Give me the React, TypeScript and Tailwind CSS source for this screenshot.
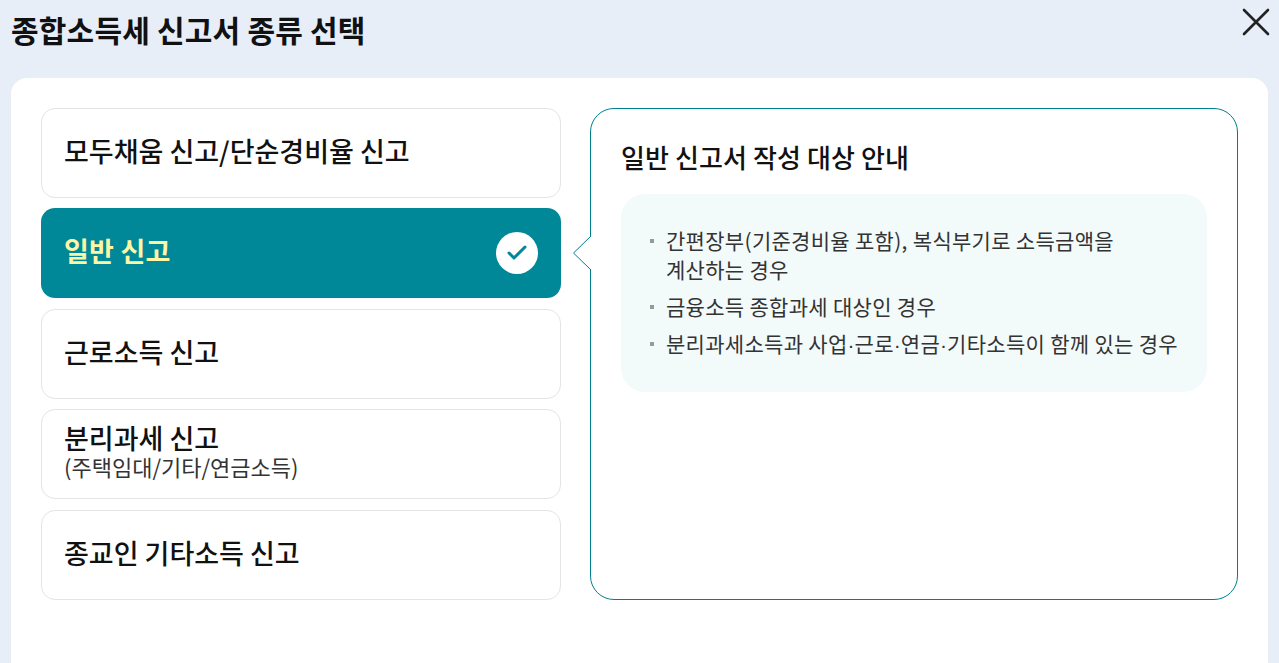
import React from 'react';
import { Check } from 'lucide-react';

const font = { fontFamily: '"Noto Sans CJK KR", "Noto Sans", sans-serif' };

const OptionCard: React.FC<{ active?: boolean; children: React.ReactNode }> = ({ active, children }) => (
  <button
    className={
      active
        ? 'flex h-[90px] w-full items-center justify-between rounded-[14px] bg-[#008898] pl-[23px] pr-[23px] text-left'
        : 'flex h-[90px] w-full items-center justify-between rounded-[14px] border border-[#e4e4e4] bg-white pl-[22px] pr-[23px] text-left'
    }
  >
    {children}
  </button>
);

const Dot = () => <span className="font-['Liberation_Sans'] tracking-[0px]">·</span>;

export default function App() {
  return (
    <div style={font} className="flex h-[663px] flex-col overflow-hidden bg-[#e7eef8] text-[#111]">
      <header className="flex h-[78px] shrink-0 items-start justify-between pl-[11px] pr-[8px]">
        <h1 className="mt-[9px] text-[30px] leading-[40px] font-bold tracking-[0.2px]">종합소득세 신고서 종류 선택</h1>
        <button className="mt-[7px]">
          <svg width="30" height="30" viewBox="0 0 30 30" fill="none" stroke="#222" strokeWidth="2.6" strokeLinecap="round">
            <path d="M3 3 L27 27 M27 3 L3 27" />
          </svg>
        </button>
      </header>
      <main className="mx-[11px] flex flex-1 gap-[29px] rounded-t-[16px] bg-white px-[30px] pt-[30px]">
        <div className="flex w-[520px] shrink-0 flex-col gap-[10.4px]">
          <OptionCard>
            <span className="pb-[4px] text-[27px] leading-[36px] font-medium">모두채움 신고/단순경비율 신고</span>
          </OptionCard>
          <OptionCard active>
            <span className="pb-[4px] text-[27px] leading-[36px] font-bold tracking-[0.2px] text-[#fdf6a5]">일반 신고</span>
            <span className="flex h-[42px] w-[42px] items-center justify-center rounded-full bg-white">
              <Check className="h-[24px] w-[24px] text-[#008898]" strokeWidth={3} />
            </span>
          </OptionCard>
          <OptionCard>
            <span className="pb-[4px] text-[27px] leading-[36px] font-medium">근로소득 신고</span>
          </OptionCard>
          <OptionCard>
            <span className="flex flex-col pb-[6px]">
              <span className="text-[27px] leading-[30px] font-medium">분리과세 신고</span>
              <span className="text-[22px] leading-[26px] text-[#333]">(주택임대/기타/연금소득)</span>
            </span>
          </OptionCard>
          <OptionCard>
            <span className="pb-[4px] text-[27px] leading-[36px] font-medium">종교인 기타소득 신고</span>
          </OptionCard>
        </div>
        <section className="relative h-[492px] w-[648px] rounded-[24px] border border-[#00808f] bg-white px-[30px] pt-[29px]">
          <svg className="absolute top-[126px] left-[-19px]" width="20" height="36" viewBox="0 0 20 36">
            <path d="M19 1 L1.5 18 L19 35" fill="white" stroke="#00808f" strokeWidth="1" />
            <rect x="19" y="1.5" width="1" height="33" fill="white" />
          </svg>
          <h2 className="text-[26px] leading-[38px] font-medium tracking-[0.1px]">일반 신고서 작성 대상 안내</h2>
          <div className="mt-[18px] h-[198px] rounded-[24px] bg-[#f3fafa] pt-[32px] pl-[29px]">
            <ul className="flex flex-col gap-[8px] text-[21px] leading-[29px] tracking-[0.3px] text-[#333]">
              <li className="flex">
                <span className="mt-[13px] mr-[12px] h-[4px] w-[4px] shrink-0 bg-[#999]" />
                <span>
                  간편장부(기준경비율 포함), 복식부기로 소득금액을
                  <br />
                  계산하는 경우
                </span>
              </li>
              <li className="flex">
                <span className="mt-[13px] mr-[12px] h-[4px] w-[4px] shrink-0 bg-[#999]" />
                <span>금융소득 종합과세 대상인 경우</span>
              </li>
              <li className="flex">
                <span className="mt-[13px] mr-[12px] h-[4px] w-[4px] shrink-0 bg-[#999]" />
                <span>
                  분리과세소득과 사업<Dot />근로<Dot />연금<Dot />기타소득이 함께 있는 경우
                </span>
              </li>
            </ul>
          </div>
        </section>
      </main>
    </div>
  );
}
